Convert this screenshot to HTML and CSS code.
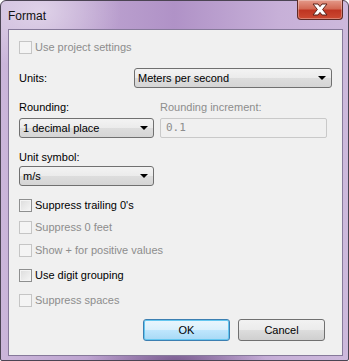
FILE: index.html
```html
<!DOCTYPE html>
<html lang="en">
<head>
    <meta charset="UTF-8">
    <title>Format</title>
    <link rel="stylesheet" href="styles.css">
</head>
<body>
    <div class="window">
        <div class="titlebar">
            <span class="title">Format</span>
            <div class="close">
                <svg width="18" height="13" viewBox="0 0 18 13">
                    <path d="M2 1 H7 L9 3.6 L11 1 H16 L11.6 6.5 L16 12 H11 L9 9.4 L7 12 H2 L6.4 6.5 Z" fill="#fff" stroke="#5a2018" stroke-width="1" stroke-linejoin="round"/>
                </svg>
            </div>
        </div>

        <div class="client">
            <div class="check first disabled">
                <span class="box"></span>
                <span>Use project settings</span>
            </div>

            <div class="units-row">
                <label>Units:</label>
                <div class="combo wide">
                    <span>Meters per second</span>
                    <span class="arrow"></span>
                </div>
            </div>

            <div class="label-row">
                <label class="col">Rounding:</label>
                <label class="muted">Rounding increment:</label>
            </div>

            <div class="field-row">
                <div class="combo">
                    <span>1 decimal place</span>
                    <span class="arrow"></span>
                </div>
                <div class="textbox">0.1</div>
            </div>

            <label class="symbol-label">Unit symbol:</label>
            <div class="combo symbol">
                <span>m/s</span>
                <span class="arrow"></span>
            </div>

            <div class="check trailing">
                <span class="box"></span>
                <span>Suppress trailing 0's</span>
            </div>
            <div class="check feet disabled">
                <span class="box"></span>
                <span>Suppress 0 feet</span>
            </div>
            <div class="check plus disabled">
                <span class="box"></span>
                <span>Show + for positive values</span>
            </div>
            <div class="check grouping">
                <span class="box"></span>
                <span>Use digit grouping</span>
            </div>
            <div class="check spaces disabled">
                <span class="box"></span>
                <span>Suppress spaces</span>
            </div>

            <div class="buttons">
                <button class="btn default">OK</button>
                <button class="btn">Cancel</button>
            </div>
        </div>
    </div>
</body>
</html>
```

FILE: styles.css
```css
body {
    margin: 0;
    font-family: "Liberation Sans", Arial, sans-serif;
    font-size: 11px;
    color: #000;
    background: #fff;
}

.window {
    width: 349px;
    height: 361px;
    box-sizing: border-box;
    border: 1px solid #4b4453;
    border-radius: 6px 6px 2px 2px;
    background:
        radial-gradient(ellipse 90px 30px at 175px 361px, rgba(80, 50, 100, 0.55), transparent),
        radial-gradient(ellipse 80px 60px at 40px 10px, rgba(255, 255, 255, 0.45), transparent),
        linear-gradient(to right, #cbb6da, #b092c7 50%, #c7b0d8 80%, #cdb9dc);
    display: flex;
    flex-direction: column;
}

.titlebar {
    height: 28px;
    display: flex;
    justify-content: space-between;
    align-items: flex-start;
}

.title {
    font-size: 12px;
    margin: 8px 0 0 7px;
    color: #111;
}

.close {
    width: 46px;
    height: 20px;
    margin: -1px 5px 0 0;
    box-sizing: border-box;
    border: 1px solid #5e2a24;
    border-top: none;
    border-radius: 0 0 4px 4px;
    background: linear-gradient(#e49a8a, #d36a55 45%, #bf3522 55%, #cc4a32);
    box-shadow: inset 0 0 0 1px rgba(255, 255, 255, 0.3);
    display: flex;
    align-items: center;
    justify-content: center;
}

.client {
    height: 327px;
    margin: 0 5px 0 7px;
    box-sizing: border-box;
    border: 1px solid #86799a;
    background: #f0f0f0;
    padding: 0 10px 0 10px;
    display: flex;
    flex-direction: column;
    align-items: flex-start;
}

label {
    line-height: 14px;
}

.muted, .disabled {
    color: #8d8d8d;
}

.check {
    display: flex;
    align-items: center;
    gap: 3px;
    height: 13px;
    line-height: 13px;
}

.box {
    width: 13px;
    height: 13px;
    box-sizing: border-box;
    border: 1px solid #8e8f8f;
    background: linear-gradient(135deg, #dcdcdc, #f6f6f6);
    box-shadow: inset 0 0 0 1px #f4f4f4;
}

.disabled .box {
    border-color: #c5c5c5;
    background: #f4f4f4;
    box-shadow: none;
}

.first { margin-top: 11px; }
.trailing { margin-top: 13px; }
.feet { margin-top: 9px; }
.plus { margin-top: 10px; }
.grouping { margin-top: 12px; }
.spaces { margin-top: 12px; }

.units-row {
    margin-top: 14px;
    align-self: stretch;
    display: flex;
    justify-content: space-between;
    align-items: center;
}

.combo {
    width: 135px;
    height: 20px;
    box-sizing: border-box;
    border: 1px solid #707070;
    border-radius: 3px;
    background: linear-gradient(#f3f3f3, #ebebeb 50%, #dddddd 51%, #d5d5d5);
    padding: 0 5px 0 3px;
    display: flex;
    align-items: center;
    justify-content: space-between;
}

.combo.wide {
    width: 198px;
}

.arrow {
    width: 0;
    height: 0;
    border-left: 4px solid transparent;
    border-right: 4px solid transparent;
    border-top: 4px solid #000;
}

.label-row {
    margin-top: 12px;
    display: flex;
}

.label-row .col {
    width: 141px;
}

.field-row {
    margin-top: 4px;
    display: flex;
    gap: 6px;
}

.textbox {
    width: 167px;
    height: 20px;
    box-sizing: border-box;
    border: 1px solid #c9c9c9;
    border-radius: 2px;
    background: #f0f0f0;
    color: #8d8d8d;
    padding-left: 5px;
    line-height: 18px;
    font-family: "DejaVu Sans Mono", monospace;
    font-size: 11px;
}

.symbol-label {
    margin-top: 12px;
}

.combo.symbol {
    margin-top: 2px;
}

.buttons {
    margin-top: 12px;
    align-self: stretch;
    display: flex;
    justify-content: flex-end;
    gap: 8px;
    padding-right: 7px;
}

.btn {
    width: 87px;
    height: 22px;
    box-sizing: border-box;
    border: 1px solid #707070;
    border-radius: 3px;
    background: linear-gradient(#f2f2f2, #ebebeb 50%, #dddddd 51%, #cfcfcf);
    font-family: "Liberation Sans", Arial, sans-serif;
    font-size: 11px;
    color: #000;
    padding: 0;
}

.btn.default {
    border-color: #3c7fb1;
    background: linear-gradient(#eaf6fd, #d9f0fc 50%, #bee6fd 51%, #a7d9f5);
    box-shadow: inset 0 0 0 1px #64c7f0;
}
```
